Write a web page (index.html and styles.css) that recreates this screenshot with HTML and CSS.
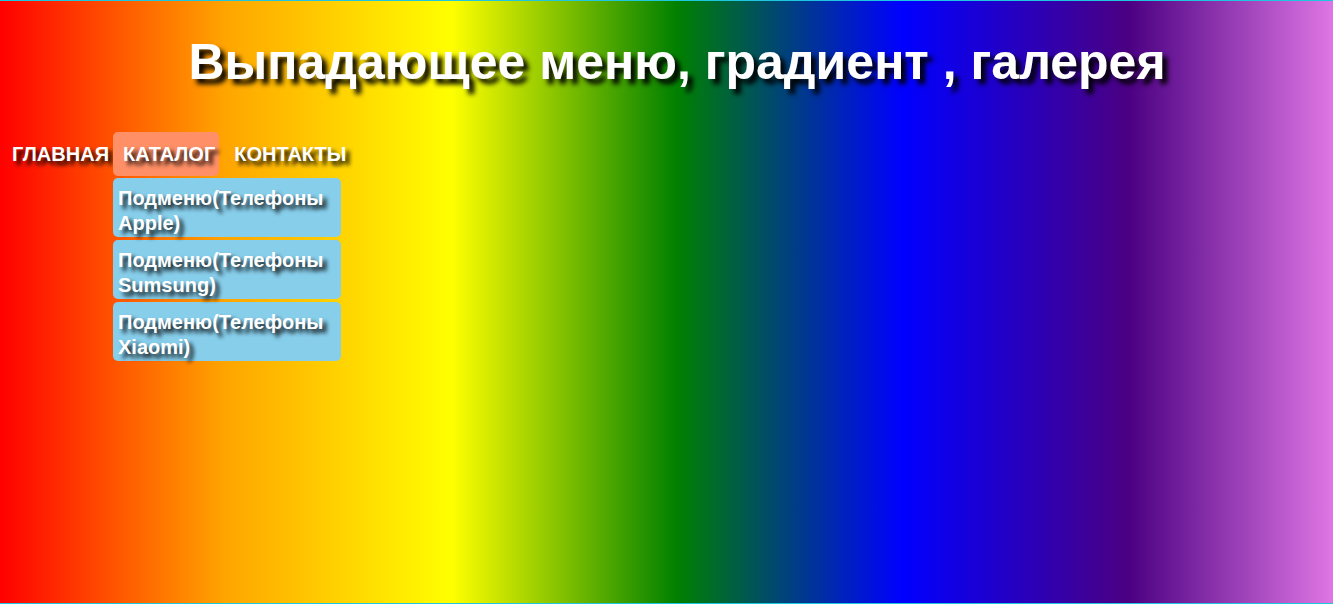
FILE: index.html
```html
<!DOCTYPE html>
<html lang="ru">
<head>
    <meta charset="UTF-8">
    <meta name="viewport" content="width=device-width, initial-scale=1.0">
    <title>Выпадающее меню, градиент , галерея</title>
    <link rel="stylesheet" href="styles.css">
</head>
<body>
    <div class="page">
        <h1>Выпадающее меню, градиент , галерея</h1>
        <ul class="menu">
            <li><a href="#">Главная</a></li>
            <li class="open">
                <a href="#">Каталог</a>
                <ul class="submenu">
                    <li><a href="#">Подменю(Телефоны Apple)</a></li>
                    <li><a href="#">Подменю(Телефоны Sumsung)</a></li>
                    <li><a href="#">Подменю(Телефоны Xiaomi)</a></li>
                </ul>
            </li>
            <li><a href="#">Контакты</a></li>
        </ul>
    </div>
</body>
</html>
```

FILE: styles.css
```css
html, body { overflow: hidden; }
body { margin: 0; font-family: "Liberation Sans", Arial, sans-serif; }
.page { width: calc(100% + 21px); min-height: 602px; border-top: 1px solid #1fc6e0; border-bottom: 1px solid #1fc6e0; background: linear-gradient(to right, red, orange, yellow, green, blue, indigo, violet); }
h1 { margin: 32px 0 41px; font-size: 50px; text-align: center; color: #fff; text-shadow: 5px 5px 5px #000; }
a { color: #fff; text-decoration: none; }
.menu { list-style: none; margin: 0; padding: 0 0 0 5px; display: flex; }
.menu > li { position: relative; padding: 11px 7px 10px; border-radius: 5px; font-size: 20px; font-weight: bold; text-transform: uppercase; text-shadow: 4px 4px 4px #000; }
.menu > li:first-child { padding-right: 4px; }
.menu > li:last-child { margin-left: 8px; }
.menu > li.open { padding-left: 10px; padding-right: 4px; background: #ff8f66; }
.submenu { list-style: none; margin: 0; padding: 0; position: absolute; left: 0; top: 46px; width: 228px; }
.submenu li { margin-bottom: 3px; padding: 8px 5px 1px; line-height: 25px; background: #87ceeb; border-radius: 5px; text-transform: none; }
```
